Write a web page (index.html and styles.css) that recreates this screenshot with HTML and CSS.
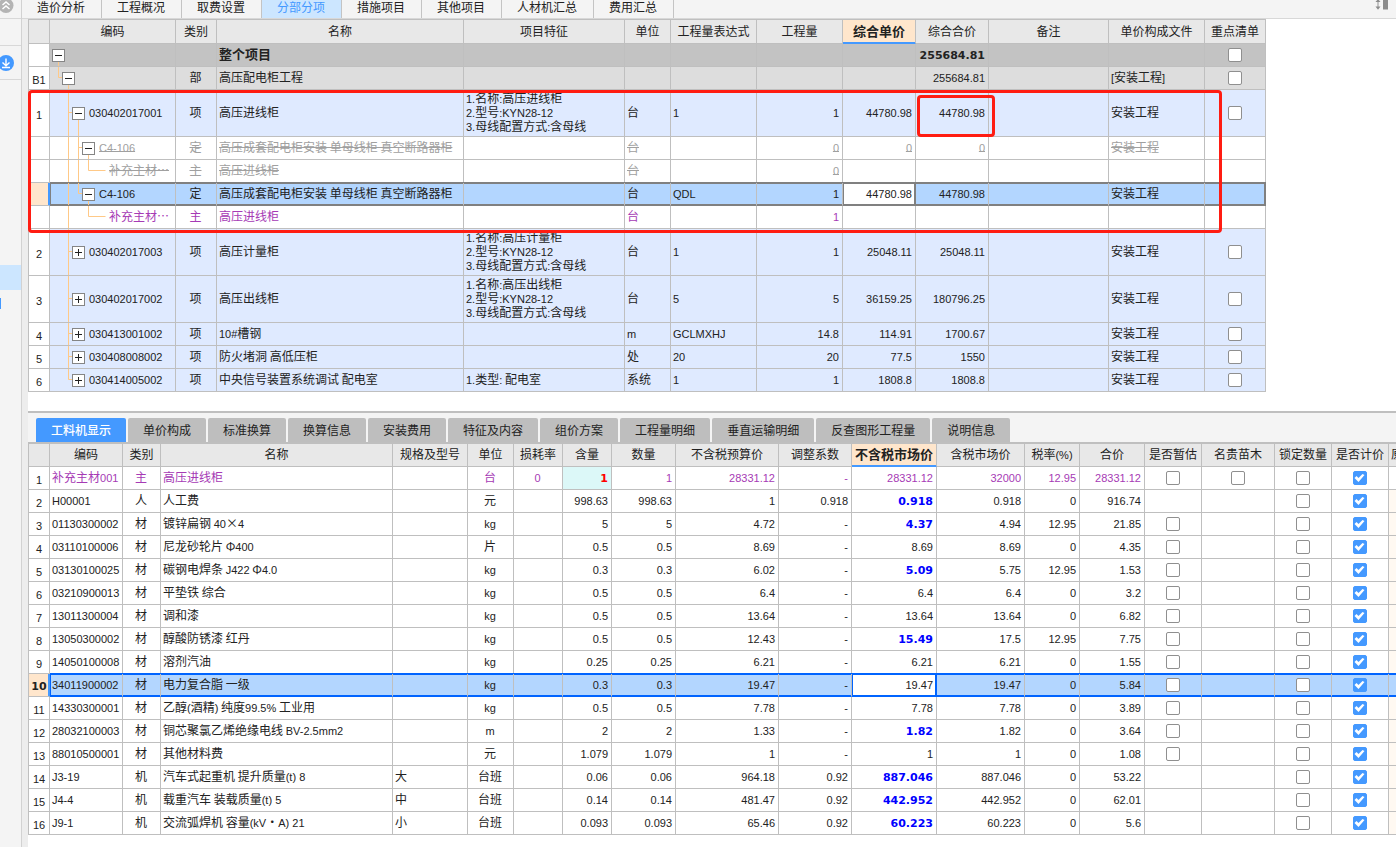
FILE: index.html
```
<!DOCTYPE html>
<html lang="zh-CN">
<head>
<meta charset="utf-8">
<title>分部分项</title>
<link rel="stylesheet" href="styles.css">
</head>
<body>
<div class="app">
  <aside class="side">
    <div class="side-cell side-top">
      <button class="side-btn" aria-label="收起"><svg width="14" height="14" viewBox="0 0 14 14"><circle cx="6" cy="5.500" r="7.500" fill="#b4b4b4"/><path d="M2.500 5 6 2l3.500 3M2.500 9 6 6l3.500 3" fill="none" stroke="#fff" stroke-width="1.500"/></svg></button>
    </div>
    <div class="side-cell side-blank"></div>
    <div class="side-cell side-down">
      <button class="side-btn" aria-label="下载"><svg width="14" height="16" viewBox="0 0 14 16"><circle cx="6" cy="8" r="8" fill="#4499ff"/><path d="M6 3.500v7M2.500 7.500 6 10.800l3.500-3.300M2 12.500h8" fill="none" stroke="#fff" stroke-width="1.400"/></svg></button>
    </div>
    <div class="side-mark"></div>
    <div class="side-tick"></div>
  </aside>
  <main class="main">
    <nav class="tabs">
      <button class="tab">造价分析</button><button class="tab">工程概况</button><button class="tab">取费设置</button><button class="tab on">分部分项</button><button class="tab">措施项目</button><button class="tab">其他项目</button><button class="tab">人材机汇总</button><button class="tab">费用汇总</button>
      <svg class="tabs-tool" width="14" height="10" viewBox="0 0 14 10"><path d="M3 1v6" stroke="#b5b5b5" stroke-width="1.500"/><path d="M.5 2 3-1l2.500 3zM.5 6.500h5L3 9.800z" fill="#8c8c8c"/><path d="M8 0h5v9.500H8z" fill="#8c8c8c"/></svg>
    </nav>
    <section class="upper">
      <table class="grid" id="items"></table>
      <div class="mark mark-rows"></div>
      <div class="mark mark-total"></div>
    </section>
    <section class="lower">
      <nav class="subtabs">
        <button class="subtab on">工料机显示</button><button class="subtab">单价构成</button><button class="subtab">标准换算</button><button class="subtab">换算信息</button><button class="subtab">安装费用</button><button class="subtab">特征及内容</button><button class="subtab">组价方案</button><button class="subtab">工程量明细</button><button class="subtab">垂直运输明细</button><button class="subtab">反查图形工程量</button><button class="subtab">说明信息</button>
      </nav>
      <div class="scroll"><table class="grid" id="resources"></table></div>
    </section>
  </main>
</div>
<script src="app.js"></script>
</body>
</html>
```
FILE: styles.css
```
* { box-sizing: border-box; }
body {
  margin: 0;
  color: #222;
  background: #fff;
  font: 12px/14px "Noto Sans CJK SC", sans-serif;
}
button { font: inherit; color: inherit; border: 0; padding: 0; background: none; }
.app { display: flex; height: 100vh; overflow: hidden; }

.side { flex: none; width: 22px; background: #f4f4f4; border-right: 1px solid #d2d2d2; overflow: hidden; }
.side-cell { border-bottom: 1px solid #d8d8d8; display: flex; align-items: center; }
.side-top { height: 19px; align-items: flex-start; }
.side-blank { height: 27px; }
.side-down { height: 34px; }
.side-btn { display: block; }
.side-btn svg { display: block; }
.side-mark { margin-top: 185px; height: 25px; background: #cce6ff; }
.side-tick { margin-top: 8px; width: 1px; height: 11px; background: #4499ff; }

.main { flex: 1; min-width: 0; display: flex; flex-direction: column; background: linear-gradient(90deg, #ededed 6px, #fff 6px); }
.tabs { display: flex; flex: none; height: 19px; background: #f4f4f4; border-bottom: 1px solid #d8d8d8; }
.tab { height: 18px; padding: 0 16px 4px 15px; border-right: 1px solid #c4c4c4; line-height: 14px; }
.tab.on { background: #cce6ff; color: #4499ff; padding-bottom: 5px; }
.tabs-tool { margin: 0 7px 0 auto; }

.upper { position: relative; flex: none; margin-left: 6px; overflow: hidden; padding-bottom: 19px; }
.lower { flex: 1; min-height: 0; margin-left: 6px; border-top: 2px solid #bfbfbf; display: flex; flex-direction: column; }

.subtabs { display: flex; gap: 2px; height: 29px; padding: 5px 8px 0; background: #f4f4f4; flex: none; }
.subtab { height: 24px; padding: 0 15px; background: #bebebe; border-radius: 2px 2px 0 0; white-space: nowrap; }
.subtab.on { background: #4499ff; color: #fff; font-weight: 500; }
.scroll { flex: 1; overflow: hidden; border-top: 1px solid #bfbfbf; }

.grid { table-layout: fixed; border-collapse: separate; border-spacing: 0; border: solid #bfbfbf; border-width: 1px 0 0 1px; width: 0; }
.grid th, .grid td {
  height: 23px;
  padding: 0 3px 2px 2px;
  border: solid #bfbfbf;
  border-width: 0 1px 1px 0;
  white-space: nowrap;
  overflow: hidden;
  text-align: left;
  font-weight: 400;
}
.grid thead th { background: #e8e8e8; text-align: center; height: 24px; padding: 0 0 2px; }
.grid#resources thead th { height: 23px; }
.grid thead th.cur { background: #ffe6cc; font-weight: 700; font-size: 13px; border-bottom-color: #4499ff; box-shadow: inset 0 -1px 0 #4499ff; }
.grid thead th.cut { text-align: left; padding-left: 2px; }
.grid tbody th { text-align: center; padding: 1px 0 0; background: #fff; }
.grid td.c { text-align: center; }
.grid td.r { text-align: right; }
.grid td.code { padding-bottom: 0; }
.grid tr.tall td, .grid tr.tall th { height: 47px; }
.n { font-family: "Liberation Sans", sans-serif; font-size: 11px; line-height: 12px; }
.grid .bold { font-weight: 700; font-size: 13px; }
.bold .n { font-family: "DejaVu Sans", sans-serif; }

.root td { background: #c3c3c3; }
.part td { background: #ddd; }
.item td { background: #dfeaff; }
.gone td { color: #a0a0a0; text-decoration: line-through; }
.main-mat td { color: #a63ab5; }
.grid .blue { color: #00f; }
.grid td.edited { background: #dcf8f8; color: #f00; }
.grid td.tint { background: #fff9f2; }

.grid tr.sel { --edge: #808080; }
#resources tr.sel { --edge: #0064ff; }
.grid tr.sel td { background: #b3d6ff; border-bottom-color: var(--edge); box-shadow: 0 -1px 0 var(--edge), inset 0 1px 0 var(--edge), inset 0 -1px 0 var(--edge); }
.grid tr.sel td:nth-child(2) { box-shadow: 0 -1px 0 var(--edge), inset 1px 1px 0 var(--edge), inset 0 -1px 0 var(--edge); }
.grid tr.sel td:last-child { border-right-color: var(--edge); box-shadow: 0 -1px 0 var(--edge), inset -1px 1px 0 var(--edge), inset 0 -1px 0 var(--edge); }
.grid tr.sel td.active { background: #fff; border-right-color: var(--edge); box-shadow: 0 -1px 0 var(--edge), inset 0 0 0 1px var(--edge); }
.grid tr.sel th { background: #ffe6cc; border-right-color: #4499ff; box-shadow: inset -1px 0 0 #4499ff; }

.tree { position: relative; display: flex; align-items: center; height: 22px; margin-left: -2px; }
.tall .tree { height: 46px; }
.tree svg.lines { position: absolute; left: 0; top: 0; overflow: visible; }
.tree-box { position: relative; flex: none; width: 13px; height: 13px; border: 1px solid #858585; background: #fff; margin-right: 4px; }
.tree-box svg { display: block; }
.tree-text { padding-bottom: 2px; }
.lv0 { padding-left: 2px; }
.lv1 { padding-left: 12px; }
.lv2 { padding-left: 22px; }
.lv3 { padding-left: 32px; }
.lv4 { padding-left: 59px; }

input[type="checkbox"] {
  appearance: none;
  position: relative;
  display: block;
  width: 14px;
  height: 14px;
  margin: 2px auto 0;
  border: 1px solid #8f8f8f;
  border-radius: 2px;
  background: #fff;
}
input[type="checkbox"]:checked { border-color: #4499ff; background: #4499ff; }
input[type="checkbox"]:checked::after {
  content: "";
  position: absolute;
  inset: 0;
  background: #fff;
  clip-path: polygon(1px 6px, 3px 4px, 5px 6px, 9px 2px, 11px 3px, 5px 10px);
}

.mark { position: absolute; border: 3px solid #ff1c12; border-radius: 4px; pointer-events: none; }
.mark-rows { left: 0; top: 71px; width: 1194px; height: 143px; }
.mark-total { left: 889px; top: 76px; width: 78px; height: 42px; }
```
FILE: app.js
```
// Latin runs get their own face so that digits keep a half-width rhythm.
const rich = t => String(t).split('\n').map(line =>
  line.replace(/[\x21-\x7e]+( [\x21-\x7e]+)*/g, m => `<span class="n">${m}</span>`)).join('<br>');

const box = (label, on) => `<input type="checkbox" aria-label="${label}"${on ? ' checked' : ''}>`;
const head = (cols, cur) =>
  '<colgroup>' + cols.map(c => `<col style="width:${c[1]}px">`).join('') + '</colgroup><thead><tr>' +
  cols.map((c, i) => `<th scope="col" class="${i === cur ? 'cur' : ''}${c[2] || ''}">${rich(c[0])}</th>`).join('') +
  '</tr></thead>';

const itemCols = [['', 21], ['编码', 126], ['类别', 41], ['名称', 247], ['项目特征', 161], ['单位', 46],
  ['工程量表达式', 86], ['工程量', 86], ['综合单价', 73], ['综合合价', 73], ['备注', 120], ['单价构成文件', 96], ['重点清单', 61]];

// row: class, number, level, sign, through-lines, elbow, opens, then cell values, checkbox
const items = [
  ['root', '', 0, '-', [], null, 1, ['', '', '整个项目', '', '', '', '', '', '255684.81', '', ''], 1],
  ['part', 'B1', 1, '-', [], 0, 1, ['', '部', '高压配电柜工程', '', '', '', '', '', '255684.81', '', '[安装工程]'], 1],
  ['item tall', '1', 2, '-', [1], 1, 1, ['030402017001', '项', '高压进线柜', '1.名称:高压进线柜\n2.型号:KYN28-12\n3.母线配置方式:含母线', '台', '1', '1', '44780.98', '44780.98', '', '安装工程'], 1],
  ['gone', '', 3, '-', [1, 2], 2, 1, ['C4-106', '定', '高压成套配电柜安装 单母线柜 真空断路器柜', '', '台', '', '0', '0', '0', '', '安装工程'], 0],
  ['gone', '', 4, '', [1, 2], 3, 0, ['补充主材…', '主', '高压进线柜', '', '台', '', '0', '', '', '', ''], 0],
  ['sel', '', 3, '-', [1], 2, 1, ['C4-106', '定', '高压成套配电柜安装 单母线柜 真空断路器柜', '', '台', 'QDL', '1', '44780.98', '44780.98', '', '安装工程'], 0],
  ['main-mat', '', 4, '', [1], 3, 0, ['补充主材…', '主', '高压进线柜', '', '台', '', '1', '', '', '', ''], 0],
  ['item tall', '2', 2, '+', [1], 1, 0, ['030402017003', '项', '高压计量柜', '1.名称:高压计量柜\n2.型号:KYN28-12\n3.母线配置方式:含母线', '台', '1', '1', '25048.11', '25048.11', '', '安装工程'], 1],
  ['item tall', '3', 2, '+', [1], 1, 0, ['030402017002', '项', '高压出线柜', '1.名称:高压出线柜\n2.型号:KYN28-12\n3.母线配置方式:含母线', '台', '5', '5', '36159.25', '180796.25', '', '安装工程'], 1],
  ['item', '4', 2, '+', [1], 1, 0, ['030413001002', '项', '10#槽钢', '', 'm', 'GCLMXHJ', '14.8', '114.91', '1700.67', '', '安装工程'], 1],
  ['item', '5', 2, '+', [1], 1, 0, ['030408008002', '项', '防火堵洞 高低压柜', '', '处', '20', '20', '77.5', '1550', '', '安装工程'], 1],
  ['item', '6', 2, '+', [], 1, 0, ['030414005002', '项', '中央信号装置系统调试 配电室', '1.类型: 配电室', '系统', '1', '1', '1808.8', '1808.8', '', '安装工程'], 1]
];

function tree(cls, level, sign, through, elbow, opens, text) {
  const h = cls.includes('tall') ? 47 : 23, mid = Math.floor(h / 2) - 0.5, x = l => 10 * l + 8.5;
  let d = through.map(l => `M${x(l)} 0V${h}`).join('');
  if (elbow !== null) d += `M${x(elbow)} 0V${mid}H${sign ? x(level) : x(elbow) + 17}`;
  if (opens) d += `M${x(level)} ${mid}V${h}`;
  const btn = sign ? `<button class="tree-box" aria-label="${sign === '+' ? '展开' : '折叠'}"><svg width="11" height="11"><path d="M2 5.5h7${sign === '+' ? 'M5.5 2v7' : ''}" stroke="#222"/></svg></button>` : '';
  return `<div class="tree lv${level}"><svg class="lines" width="120" height="${h}"><path d="${d}" fill="none" stroke="#ffc987"/></svg>${btn}<span class="tree-text">${rich(text)}</span></div>`;
}

const itemAlign = ['code', 'c', '', '', '', '', 'r', 'r', 'r', '', ''];
document.getElementById('items').innerHTML = head(itemCols, 8) + '<tbody>' + items.map(r => {
  const [cls, no, level, sign, through, elbow, opens, vals, check] = r;
  return `<tr class="${cls}"><th scope="row">${rich(no)}</th>` + vals.map((v, i) => {
    const extra = (cls === 'root' ? ' bold' : '') + (cls === 'sel' && i === 7 ? ' active' : '');
    return `<td class="${itemAlign[i]}${extra}">${i ? rich(v) : tree(cls, level, sign, through, elbow, opens, v)}</td>`;
  }).join('') + `<td class="c">${check ? box('重点清单') : ''}</td></tr>`;
}).join('') + '</tbody>';

const resCols = [['', 21], ['编码', 73], ['类别', 38], ['名称', 232], ['规格及型号', 75], ['单位', 46], ['损耗率', 49],
  ['含量', 49], ['数量', 64], ['不含税预算价', 103], ['调整系数', 73], ['不含税市场价', 85], ['含税市场价', 88],
  ['税率(%)', 55], ['合价', 65], ['是否暂估', 57], ['名贵苗木', 73], ['锁定数量', 57], ['是否计价', 57], ['原价', 80, 'cut']];

// code | kind | name | spec | unit | loss | content | amount | budget | factor | market | taxed | rate | total | boxes
const resources = [
  '补充主材001|主|高压进线柜||台|0|1|1|28331.12|-|28331.12|32000|12.95|28331.12|2',
  'H00001|人|人工费||元||998.63|998.63|1|0.918|*0.918|0.918|0|916.74|0',
  '01130300002|材|镀锌扁钢 40×4||kg||5|5|4.72|-|*4.37|4.94|12.95|21.85|1',
  '03110100006|材|尼龙砂轮片 Φ400||片||0.5|0.5|8.69|-|8.69|8.69|0|4.35|1',
  '03130100025|材|碳钢电焊条 J422 Φ4.0||kg||0.3|0.3|6.02|-|*5.09|5.75|12.95|1.53|1',
  '03210900013|材|平垫铁 综合||kg||0.5|0.5|6.4|-|6.4|6.4|0|3.2|1',
  '13011300004|材|调和漆||kg||0.5|0.5|13.64|-|13.64|13.64|0|6.82|1',
  '13050300002|材|醇酸防锈漆 红丹||kg||0.5|0.5|12.43|-|*15.49|17.5|12.95|7.75|1',
  '14050100008|材|溶剂汽油||kg||0.25|0.25|6.21|-|6.21|6.21|0|1.55|1',
  '34011900002|材|电力复合脂 一级||kg||0.3|0.3|19.47|-|19.47|19.47|0|5.84|1',
  '14330300001|材|乙醇(酒精) 纯度99.5% 工业用||kg||0.5|0.5|7.78|-|7.78|7.78|0|3.89|1',
  '28032100003|材|铜芯聚氯乙烯绝缘电线 BV-2.5mm2||m||2|2|1.33|-|*1.82|1.82|0|3.64|1',
  '88010500001|材|其他材料费||元||1.079|1.079|1|-|1|1|0|1.08|1',
  'J3-19|机|汽车式起重机 提升质量(t) 8|大|台班||0.06|0.06|964.18|0.92|*887.046|887.046|0|53.22|0',
  'J4-4|机|载重汽车 装载质量(t) 5|中|台班||0.14|0.14|481.47|0.92|*442.952|442.952|0|62.01|0',
  'J9-1|机|交流弧焊机 容量(kV·A) 21|小|台班||0.093|0.093|65.46|0.92|*60.223|60.223|0|5.6|0'
];
const resAlign = ['', 'c', '', '', 'c', 'c', 'r', 'r', 'r', 'r', 'r', 'r', 'r', 'r'];
document.getElementById('resources').innerHTML = head(resCols, 11) + '<tbody>' + resources.map((line, n) => {
  const f = line.split('|'), boxes = +f.pop(), sel = n === 9;
  return `<tr class="${n === 0 ? 'main-mat' : sel ? 'sel' : ''}"><th scope="row" class="${sel ? 'bold' : ''}">${rich(n + 1)}</th>` +
    f.map((v, i) => {
      let c = resAlign[i];
      if (v[0] === '*') { v = v.slice(1); c += ' bold blue'; }
      if (n === 0 && i === 6) c += ' bold edited';
      if (sel && i === 10) c += ' active';
      return `<td class="${c}">${rich(v)}</td>`;
    }).join('') +
    `<td class="c">${boxes ? box('是否暂估') : ''}</td><td class="c">${boxes > 1 ? box('名贵苗木') : ''}</td>` +
    `<td class="c">${box('锁定数量')}</td><td class="c">${box('是否计价', true)}</td><td class="${n ? 'tint' : ''}"></td></tr>`;
}).join('') + '</tbody>';
```
